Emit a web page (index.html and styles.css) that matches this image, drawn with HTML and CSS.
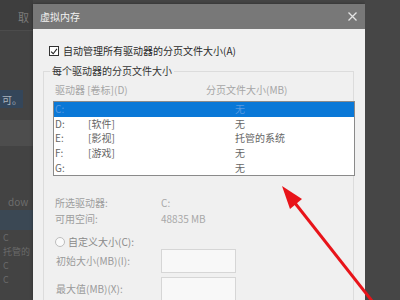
FILE: index.html
```html
<!DOCTYPE html>
<html lang="zh-CN">
<head>
<meta charset="utf-8">
<title>虚拟内存</title>
<link rel="stylesheet" href="styles.css">
</head>
<body>
<div class="screen">
  <div class="bg-left">
    <div class="bl-top"><span>取</span></div>
    <div class="bl-gap1"></div>
    <div class="bl-blue"><span>可。</span></div>
    <div class="bl-gap2"></div>
    <div class="bl-band"></div>
    <div class="bl-gap3"></div>
    <div class="bl-text"><span>dow</span></div>
    <div class="bl-blue2"></div>
    <div class="bl-line"><span>C</span></div>
    <div class="bl-line"><span>托管的</span></div>
    <div class="bl-line"><span>C</span></div>
    <div class="bl-line"><span>C</span></div>
  </div>

  <div class="dialog">
    <div class="titlebar">
      <span class="title">虚拟内存</span>
      <svg class="close" width="9" height="9" viewBox="0 0 9 9"><path d="M0.5 0.5L8.5 8.5M8.5 0.5L0.5 8.5" stroke="#e4e4e4" stroke-width="1.3" fill="none"/></svg>
    </div>
    <div class="body">
      <div class="check-row">
        <span class="checkbox"><svg width="9" height="9" viewBox="0 0 9 9"><path d="M1.2 4.6L3.6 7L7.8 1.6" stroke="#222" stroke-width="1.2" fill="none"/></svg></span>
        <span class="check-label">自动管理所有驱动器的分页文件大小(A)</span>
      </div>

      <fieldset class="group">
        <legend>每个驱动器的分页文件大小</legend>
        <div class="col-head">
          <span>驱动器 [卷标](D)</span>
          <span>分页文件大小(MB)</span>
        </div>
        <div class="list">
          <div class="row selected"><span>C:</span><span></span><span>无</span></div>
          <div class="row"><span>D:</span><span>[软件]</span><span>无</span></div>
          <div class="row"><span>E:</span><span>[影视]</span><span>托管的系统</span></div>
          <div class="row"><span>F:</span><span>[游戏]</span><span>无</span></div>
          <div class="row"><span>G:</span><span></span><span>无</span></div>
        </div>

        <div class="info">
          <span>所选驱动器:</span><span>C:</span>
          <span>可用空间:</span><span>48835 MB</span>
        </div>

        <div class="radio-row">
          <span class="radio"></span>
          <span class="radio-label">自定义大小(C):</span>
        </div>

        <div class="field-row">
          <span>初始大小(MB)(I):</span>
          <span class="input"></span>
        </div>
        <div class="field-row">
          <span>最大值(MB)(X):</span>
          <span class="input"></span>
        </div>
      </fieldset>
    </div>
  </div>

  <div class="bg-right"></div>

  <svg class="arrow" width="400" height="300" viewBox="0 0 400 300">
    <line x1="291" y1="198" x2="376" y2="306" stroke="#e8141a" stroke-width="3"/>
    <polygon points="282,186 290,209 302,199" fill="#e8141a"/>
  </svg>
</div>
</body>
</html>
```
FILE: styles.css
```css
* { box-sizing: border-box; }
html, body { margin: 0; padding: 0; }
body {
  width: 400px;
  height: 300px;
  overflow: hidden;
  background: #454545;
  font-family: "Noto Sans CJK SC", "Noto Sans", sans-serif;
  font-size: 10px;
}
.screen {
  position: relative;
  display: flex;
  width: 400px;
  height: 300px;
  overflow: hidden;
}

/* left background */
.bg-left {
  width: 33px;
  flex: none;
  display: flex;
  flex-direction: column;
  background: #434343;
  overflow: hidden;
}
.bg-left > div {
  display: flex;
  white-space: nowrap;
}
.bl-top {
  height: 31px;
  background: #3e3e3e;
  border-bottom: 1px solid #4c4c4c;
  align-items: center;
  color: #7c7c7c;
  font-size: 11px;
  padding: 4px 0 0 18px;
}
.bl-gap1 { height: 59px; }
.bl-blue {
  height: 18px;
  width: 23px;
  background: #34465a;
  color: #a9b3bd;
  font-size: 10px;
  align-items: center;
  padding-left: 2px;
}
.bl-gap2 { height: 12px; }
.bl-band { height: 26px; background: #4d4d4d; }
.bl-gap3 { height: 46px; }
.bl-text {
  height: 18px;
  color: #6d6d6d;
  font-size: 10px;
  align-items: center;
  padding-left: 8px;
}
.bl-blue2 { height: 20px; background: #3b4854; }
.bl-line {
  height: 14px;
  color: #6a6a6a;
  font-size: 9px;
  align-items: center;
  padding-left: 3px;
}

.bg-right {
  flex: 1;
  background: #464646;
}

/* dialog */
.dialog {
  width: 332px;
  flex: none;
  margin-top: 4px;
  background: #f0f0f0;
  display: flex;
  flex-direction: column;
  box-shadow: 0 0 3px rgba(0,0,0,0.35);
}
.titlebar {
  height: 25px;
  flex: none;
  background: #787878;
  display: flex;
  align-items: center;
  justify-content: space-between;
  padding: 0 8px 0 7px;
}
.title {
  color: #f2f2f2;
  font-size: 10px;
  line-height: 12px;
}
.close { display: block; }

.body {
  padding: 16px 0 0 10px;
}
.check-row {
  display: flex;
  align-items: center;
  height: 12px;
  margin-left: 6px;
}
.checkbox {
  width: 10px;
  height: 10px;
  border: 1px solid #333;
  background: #fff;
  display: flex;
  align-items: center;
  justify-content: center;
  flex: none;
}
.checkbox svg { display: block; }
.check-label {
  margin-left: 4px;
  color: #2a2a2a;
  line-height: 12px;
}

.group {
  margin: 8px 0 0 0;
  padding: 0 0 0 9px;
  width: 311px;
  min-width: 0;
  border: 1px solid #dcdcdc;
  border-bottom: none;
}
.group legend {
  padding: 0 2px;
  margin-left: -3px;
  color: #333;
  line-height: 12px;
}
.col-head {
  display: grid;
  grid-template-columns: 151px 1fr;
  margin-top: 7px;
  padding-left: 2px;
  line-height: 12px;
  color: #a6a6a6;
}
.list {
  margin-top: 5px;
  margin-right: -2px;
  border: 1px solid #8a8a8a;
  background: #fff;
}
.row {
  height: 14.6px;
  display: grid;
  grid-template-columns: 33px 147px 1fr;
  align-items: center;
  padding-left: 1px;
  color: #666;
  line-height: 12px;
}
.row.selected {
  background: #0a78d7;
  color: #5a9ae0;
}

.info {
  display: grid;
  grid-template-columns: 106px 1fr;
  margin-top: 19px;
  padding-left: 2px;
  line-height: 16px;
  color: #9e9e9e;
}
.info span:nth-child(even) { color: #a8a8a8; }

.radio-row {
  display: flex;
  align-items: center;
  height: 12px;
  margin-top: 9px;
  padding-left: 2px;
}
.radio {
  width: 10px;
  height: 10px;
  border: 1px solid #bdbdbd;
  border-radius: 50%;
  background: #fafafa;
  flex: none;
}
.radio-label {
  margin-left: 3px;
  color: #8a8a8a;
  line-height: 12px;
}

.field-row {
  display: grid;
  grid-template-columns: 105px 75px;
  align-items: center;
  padding-left: 3px;
  color: #9a9a9a;
  line-height: 12px;
  margin-top: 4px;
}
.radio-row + .field-row { margin-top: 1px; }
.input {
  height: 24px;
  border: 1px solid #d6d6d6;
  background: #f8f8f8;
}

.arrow {
  position: absolute;
  left: 0;
  top: 0;
  pointer-events: none;
}
```
